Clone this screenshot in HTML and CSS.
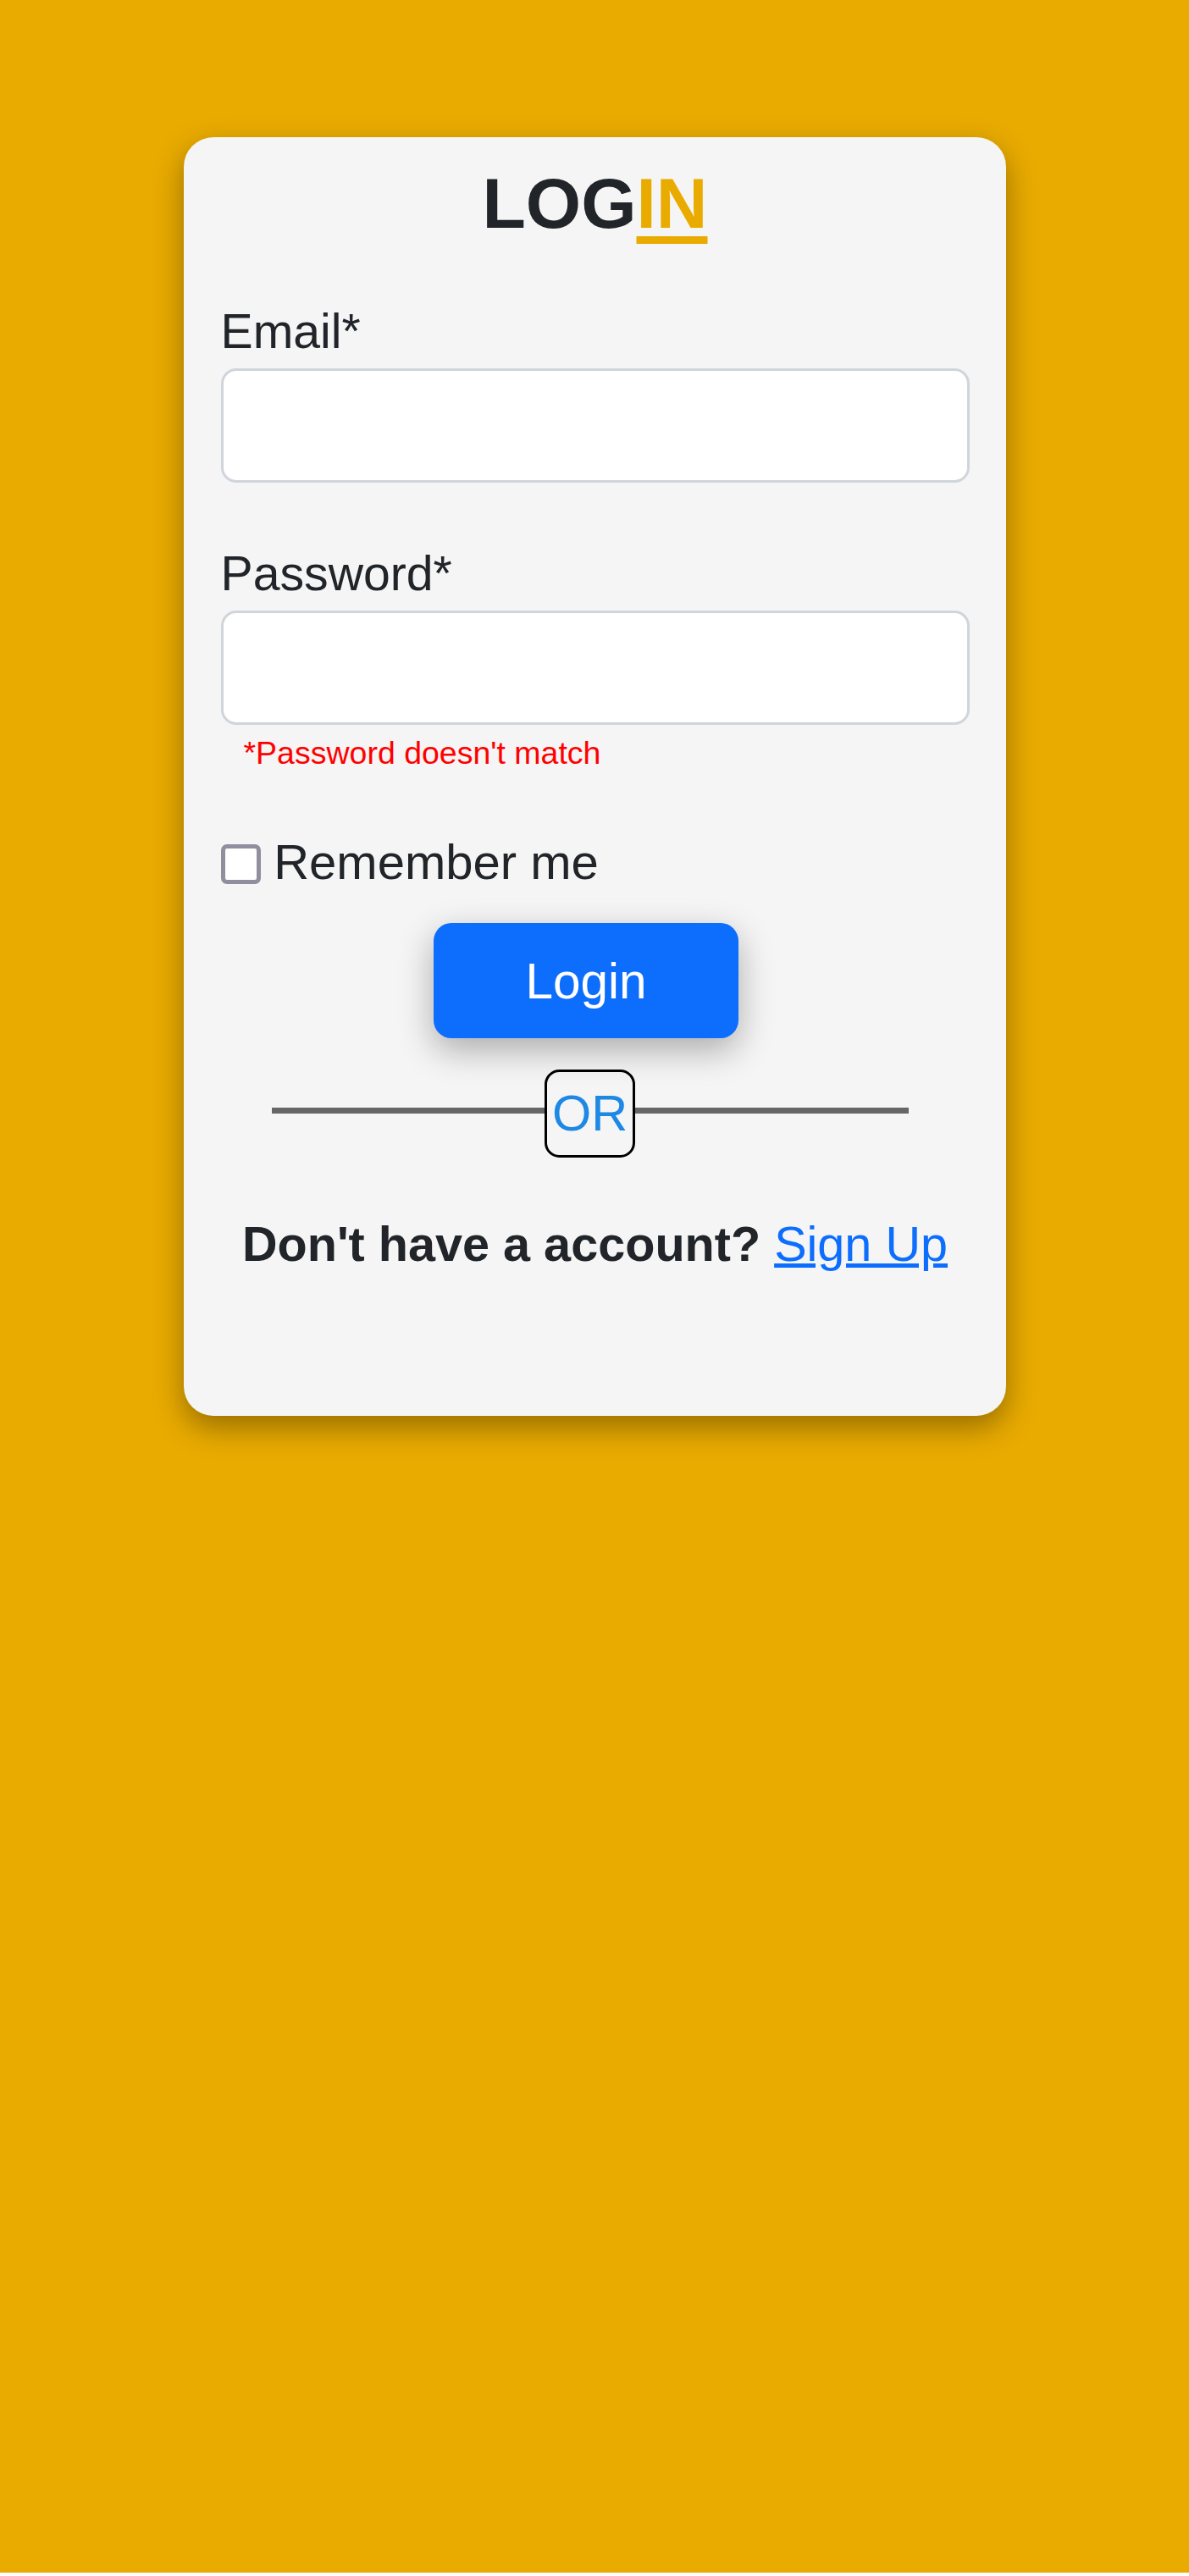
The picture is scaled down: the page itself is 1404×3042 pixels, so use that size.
FILE: index.html
```html
<!DOCTYPE html>
<html lang="en">
<head>
<meta charset="utf-8">
<title>Login</title>
<link rel="stylesheet" href="styles.css">
</head>
<body>
<div class="page">
  <div class="card">
    <h1 class="title">LOG<span class="accent">IN</span></h1>
    <form class="form">
      <div class="field field-email">
        <label class="label" for="email">Email*</label>
        <input class="input" id="email" type="email">
      </div>
      <div class="field field-password">
        <label class="label" for="password">Password*</label>
        <input class="input" id="password" type="password">
      </div>
      <p class="error">*Password doesn't match</p>
      <label class="remember"><input type="checkbox" class="check"><span>Remember me</span></label>
      <div class="actions"><button type="button" class="btn">Login</button></div>
      <div class="divider"><span class="line"></span><span class="or">OR</span><span class="line"></span></div>
      <p class="signup"><strong>Don't have a account?</strong> <a class="link" href="#">Sign Up</a></p>
    </form>
  </div>
</div>
</body>
</html>
```
FILE: styles.css
```css
html {
  background: #ffffff;
}
body {
  margin: 0;
  font-family: "Liberation Sans", Arial, Helvetica, sans-serif;
  color: #212529;
}
.page {
  box-sizing: border-box;
  height: 3038px;
  padding-top: 162px;
  background: #e9ab00;
}
.card {
  box-sizing: border-box;
  width: 971px;
  margin: 0 auto;
  padding: 30px 43px 170px 44px;
  background: #f5f5f5;
  border-radius: 35px;
  box-shadow: 0 14px 35px rgba(0, 0, 0, 0.35);
}
.title {
  margin: 0;
  font-size: 84px;
  font-weight: 700;
  line-height: 96px;
  text-align: center;
  color: #212529;
}
.accent {
  color: #e9ab00;
  text-decoration: underline;
  text-decoration-thickness: 8.5px;
  text-underline-offset: 10px;
}
.form {
  display: flex;
  flex-direction: column;
}
.field {
  display: flex;
  flex-direction: column;
}
.field-email {
  margin-top: 69.5px;
}
.field-password {
  margin-top: 74.2px;
}
.label {
  font-size: 57.2px;
  line-height: 66px;
  color: #212529;
}
.input {
  box-sizing: border-box;
  width: 100%;
  height: 134.5px;
  margin: 11.6px 0 0;
  border: 3.5px solid #d0d5db;
  border-radius: 18px;
  background: #ffffff;
  font: inherit;
  font-size: 56px;
  outline: none;
}
.error {
  margin: 12.1px 0 0;
  padding-left: 27px;
  font-size: 37.5px;
  line-height: 43px;
  color: #ff0000;
}
.remember {
  display: flex;
  align-items: center;
  margin-top: 73.8px;
  font-size: 58px;
  line-height: 66px;
  color: #212529;
}
.check {
  appearance: none;
  -webkit-appearance: none;
  box-sizing: border-box;
  width: 47px;
  height: 47px;
  margin: 5.6px 15.7px 0 0;
  border: 5.5px solid #908f9d;
  border-radius: 7px;
  background: #ffffff;
}
.actions {
  display: flex;
  justify-content: center;
  margin-top: 39.7px;
}
.btn {
  width: 360px;
  height: 136px;
  margin-right: 21px;
  padding: 0;
  border: none;
  border-radius: 21px;
  background: #0d6efd;
  color: #ffffff;
  font-family: inherit;
  font-size: 58.5px;
  line-height: normal;
  box-shadow: 0 14px 40px rgba(0, 0, 0, 0.3);
}
.divider {
  display: flex;
  align-items: center;
  width: 752px;
  margin: 36.6px 0 0 60px;
}
.line {
  flex: 1;
  height: 7px;
  margin-bottom: 8px;
  background: #666666;
}
.or {
  padding: 15px 5.5px;
  border: 3.5px solid #000000;
  border-radius: 17.5px;
  font-size: 59.5px;
  line-height: 68px;
  color: #1e88e5;
}
.signup {
  margin: 68.6px 0 0;
  font-size: 57.6px;
  line-height: 66px;
  text-align: center;
  color: #212529;
}
.signup strong {
  font-weight: 700;
}
.link {
  color: #0d6efd;
  text-decoration: underline;
}
```
